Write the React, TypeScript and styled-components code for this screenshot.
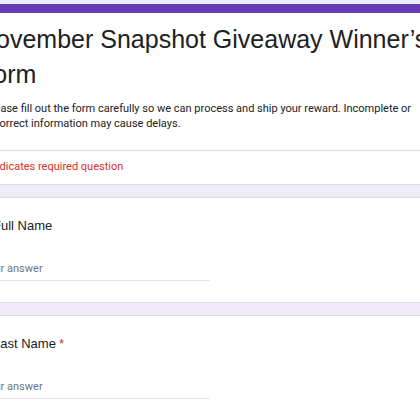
import React from "react";
import styled, { createGlobalStyle } from "styled-components";

const GlobalStyle = createGlobalStyle`
  html, body {
    margin: 0;
    padding: 0;
    background: #f0ebf8;
    overflow: hidden;
  }
  body { padding-top: 4px; }
  * { box-sizing: border-box; }
`;

const Column = styled.main`
  display: flex;
  flex-direction: column;
  gap: 12px;
  margin-left: -40px;
  width: 520px;
`;

const Card = styled.section<{ $accent?: boolean }>`
  background: #ffffff;
  border: 1px solid #dadce0;
  border-top: ${(p) => (p.$accent ? "9px solid #673ab7" : "1px solid #dadce0")};
  border-radius: 8px;
`;

const HeaderBody = styled.div`
  padding: 9px 24px 19px 24px;
`;

const FormTitle = styled.h1`
  margin: 0 0 0 -7px;
  font-family: "Liberation Sans", Arial, sans-serif;
  font-weight: 400;
  font-size: 25px;
  line-height: 35px;
  color: #202124;
  white-space: nowrap;
`;

const Description = styled.p`
  margin: 9px 0 0;
  font-family: Roboto, "Noto Sans", sans-serif;
  font-size: 11px;
  line-height: 15px;
  color: #202124;
  width: 440px;
`;

const Divider = styled.hr`
  margin: 0;
  border: none;
  border-top: 1px solid #dadce0;
`;

const RequiredNote = styled.div`
  padding: 8px 24px 10px 22px;
  font-family: Roboto, "Noto Sans", sans-serif;
  font-size: 11px;
  line-height: 15px;
  color: #d93025;
`;

const QuestionBody = styled.div`
  display: flex;
  flex-direction: column;
  padding: 19px 24px 21px 21px;
`;

const QuestionTitle = styled.div`
  padding-left: 11px;
  font-family: "Liberation Sans", Arial, sans-serif;
  font-size: 13px;
  line-height: 18px;
  color: #202124;
`;

const Star = styled.span`
  color: #d93025;
  margin-left: 3px;
`;

const AnswerInput = styled.input`
  margin-top: 26px;
  width: 228px;
  height: 20px;
  padding: 0 0 4px 0;
  border: none;
  border-bottom: 1px solid #e2e2e2;
  background: transparent;
  outline: none;
  font-family: Roboto, "Noto Sans", sans-serif;
  font-size: 11px;
  line-height: 15px;
  color: #202124;
  &::placeholder {
    color: #70757a;
  }
`;

type Question = { label: string; required?: boolean };

const questions: Question[] = [
  { label: "Full Name" },
  { label: "Last Name", required: true },
];

export default function App() {
  return (
    <>
      <GlobalStyle />
      <Column>
        <Card $accent>
          <HeaderBody>
            <FormTitle>
              November Snapshot Giveaway Winner’s
              <br />
              Form
            </FormTitle>
            <Description>
              Please fill out the form carefully so we can process and ship your reward. Incomplete or
              incorrect information may cause delays.
            </Description>
          </HeaderBody>
          <Divider />
          <RequiredNote>* Indicates required question</RequiredNote>
        </Card>
        {questions.map((q) => (
          <Card key={q.label}>
            <QuestionBody>
              <QuestionTitle>
                {q.label}
                {q.required && <Star>*</Star>}
              </QuestionTitle>
              <AnswerInput placeholder="Your answer" />
            </QuestionBody>
          </Card>
        ))}
      </Column>
    </>
  );
}
